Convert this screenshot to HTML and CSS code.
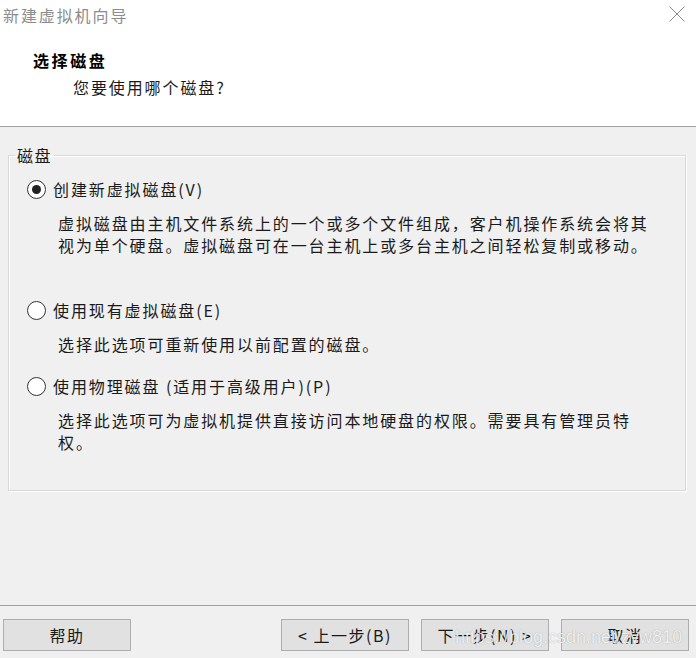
FILE: index.html
```html
<!DOCTYPE html>
<html lang="zh-CN">
<head>
<meta charset="utf-8">
<title>新建虚拟机向导</title>
<link rel="stylesheet" href="styles.css">
</head>
<body>
<div class="window">
  <div class="titlebar">
    <span class="title">新建虚拟机向导</span>
    <svg class="close" width="16" height="16" viewBox="0 0 16 16"><path d="M0.5 0.5 L15.5 15.5 M15.5 0.5 L0.5 15.5" stroke="#8a8a8a" stroke-width="1" fill="none"/></svg>
  </div>
  <div class="header">
    <div class="h-title">选择磁盘</div>
    <div class="h-sub">您要使用哪个磁盘?</div>
  </div>
  <div class="content">
    <fieldset class="group">
      <legend class="legend">磁盘</legend>
      <div class="option opt1">
        <div class="row"><span class="radio checked"></span><span class="label">创建新虚拟磁盘(V)</span></div>
        <div class="desc">虚拟磁盘由主机文件系统上的一个或多个文件组成，客户机操作系统会将其<br>视为单个硬盘。虚拟磁盘可在一台主机上或多台主机之间轻松复制或移动。</div>
      </div>
      <div class="option opt2">
        <div class="row"><span class="radio"></span><span class="label">使用现有虚拟磁盘(E)</span></div>
        <div class="desc">选择此选项可重新使用以前配置的磁盘。</div>
      </div>
      <div class="option opt3">
        <div class="row"><span class="radio"></span><span class="label">使用物理磁盘 (适用于高级用户)(P)</span></div>
        <div class="desc">选择此选项可为虚拟机提供直接访问本地硬盘的权限。需要具有管理员特<br>权。</div>
      </div>
    </fieldset>
  </div>
  <div class="footer">
    <button class="btn">帮助</button>
    <div class="spacer"></div>
    <button class="btn">&lt; 上一步(B)</button>
    <button class="btn">下一步(N) &gt;</button>
    <button class="btn">取消</button>
    <span class="watermark">https://blog.csdn.net/zyw810</span>
  </div>
</div>
</body>
</html>
```
FILE: styles.css
```css
html, body {
  margin: 0;
  padding: 0;
  background: #f0f0f0;
}
.window {
  width: 696px;
  height: 658px;
  display: flex;
  flex-direction: column;
  font-family: "Noto Sans CJK SC", "Noto Sans", sans-serif;
  color: #1a1a1a;
  overflow: hidden;
}
.titlebar {
  height: 30px;
  background: #fff;
  display: flex;
  align-items: center;
  justify-content: space-between;
  padding: 0 11px 0 3px;
  box-sizing: border-box;
}
.title {
  font-size: 16px;
  letter-spacing: 1.9px;
  color: #8c8c8c;
  line-height: 30px;
}
.close {
  display: block;
  margin-top: -2px;
}
.header {
  height: 97px;
  background: #fff;
  border-bottom: 1px solid #a0a0a0;
  box-sizing: border-box;
  padding-top: 19px;
}
.h-title {
  margin-left: 33px;
  font-size: 16px;
  font-weight: bold;
  letter-spacing: 2.6px;
  line-height: 22px;
  color: #000;
}
.h-sub {
  margin-left: 73px;
  margin-top: 5px;
  font-size: 16px;
  letter-spacing: 1.9px;
  line-height: 22px;
  color: #1a1a1a;
}
.content {
  flex: 1;
  padding: 18px 10px 0 8px;
}
.group {
  margin: 0;
  padding: 13px 0 37px 18px;
  border: 1px solid #d9d9d9;
  box-shadow: inset 1px 1px 0 #fff, 1px 1px 0 #fff;
  min-width: 0;
}
.legend {
  margin-left: -12px;
  padding: 0 2px;
  font-size: 16px;
  letter-spacing: 1.5px;
  line-height: 20px;
  color: #1a1a1a;
}
.row {
  display: flex;
  align-items: center;
  height: 22px;
}
.radio {
  width: 19px;
  height: 19px;
  border: 1px solid #333;
  border-radius: 50%;
  background: #fff;
  box-sizing: border-box;
  display: flex;
  align-items: center;
  justify-content: center;
  margin-right: 7px;
  flex: none;
}
.radio.checked::after {
  content: "";
  width: 9px;
  height: 9px;
  border-radius: 50%;
  background: #222;
}
.label {
  font-size: 16px;
  letter-spacing: 1.9px;
  line-height: 22px;
  color: #1a1a1a;
}
.desc {
  margin-left: 31px;
  margin-top: 12px;
  font-size: 16px;
  letter-spacing: 1.9px;
  line-height: 22px;
  color: #1a1a1a;
}
.opt1 { margin-bottom: 43px; }
.opt2 { margin-bottom: 20px; }
.footer {
  position: relative;
  height: 53px;
  border-top: 1px solid #a0a0a0;
  box-sizing: border-box;
  display: flex;
  align-items: flex-start;
  gap: 12px;
  padding: 13px 7px 0 3px;
}
.spacer {
  flex: 1;
}
.btn {
  width: 128px;
  height: 32px;
  background: #e1e1e1;
  border: 1px solid #adadad;
  font-family: "Noto Sans CJK SC", "Noto Sans", sans-serif;
  font-size: 16px;
  letter-spacing: 1.5px;
  color: #1a1a1a;
  padding: 0;
  flex: none;
}
.watermark {
  position: absolute;
  left: 455px;
  top: 21px;
  font-family: "Liberation Sans", Arial, sans-serif;
  font-size: 18px;
  color: rgba(255, 255, 255, 0.85);
  text-shadow: 0 0 1px rgba(0, 0, 0, 0.35);
  pointer-events: none;
}
```
